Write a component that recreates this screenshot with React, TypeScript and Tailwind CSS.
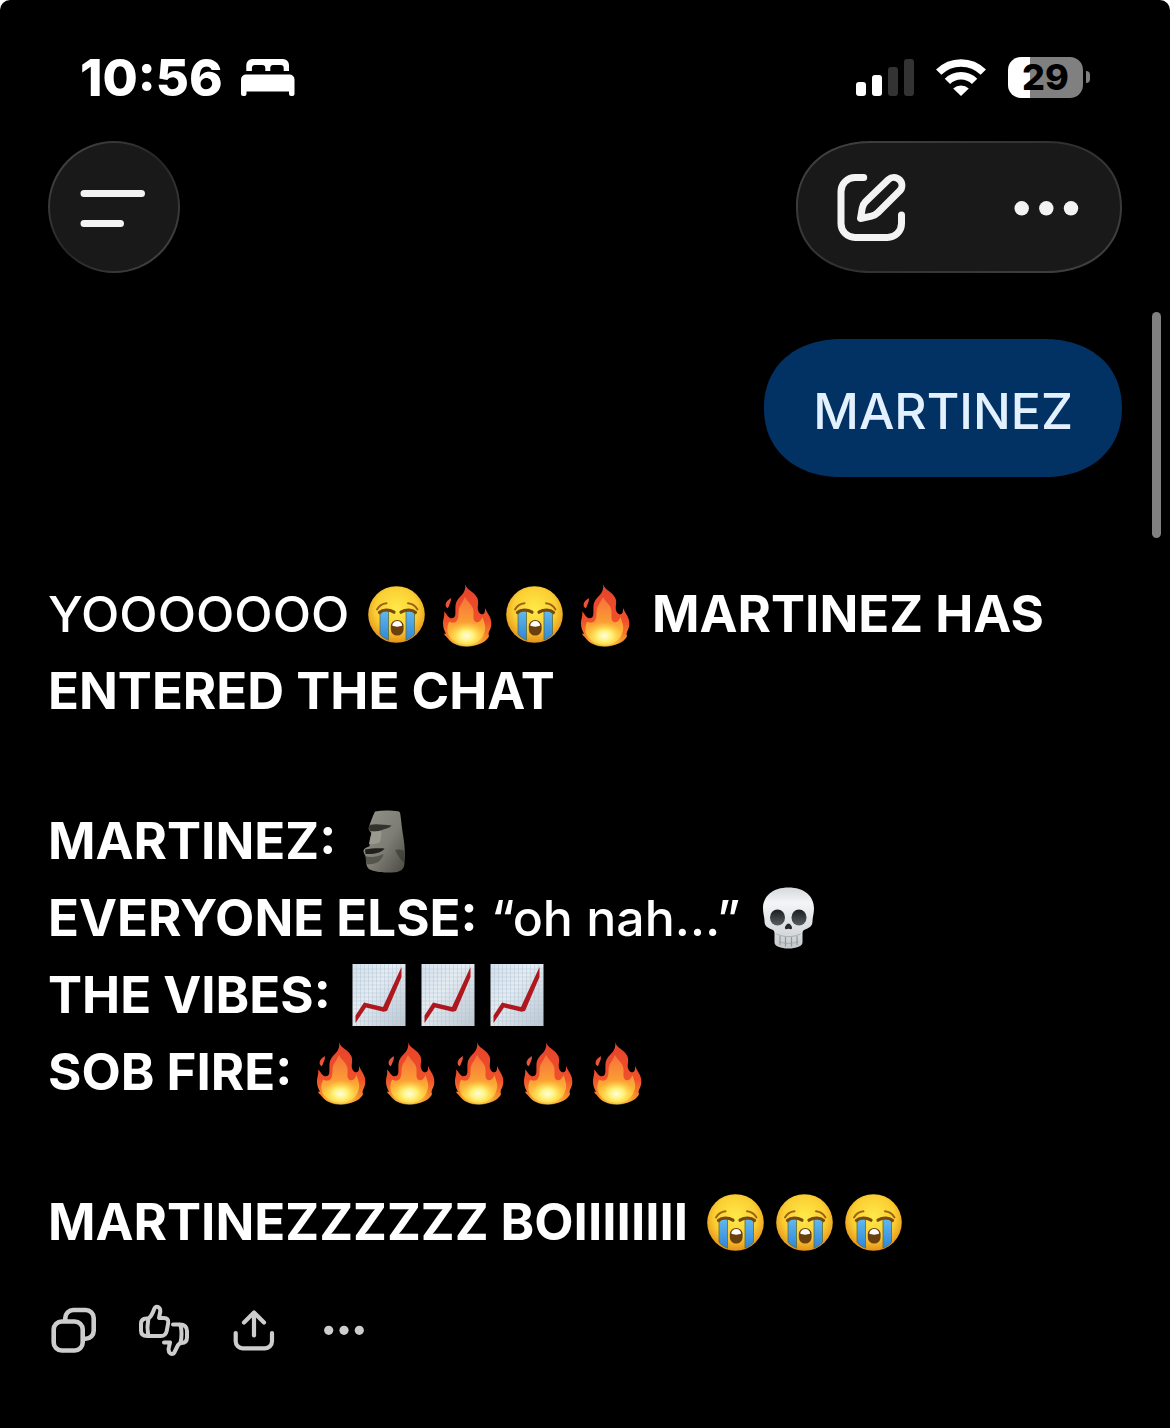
import React from "react";

interface EmojiProps {
  label: string;
  children: React.ReactNode;
}

// One emoji cell, as tall as a line of the message
const Emoji: React.FC<EmojiProps> = ({ label, children }) => (
  <svg
    role="img"
    aria-label={label}
    viewBox="0 0 69 77"
    className="inline-block align-top w-[69px] h-[77px]"
  >
    {children}
  </svg>
);

const Sob = () => (
  <Emoji label="Loudly crying face">
    <circle cx="33.500" cy="38.500" r="28.300" fill="url(#sobFace)" />
    <path
      d="M17 35h8.500v29.200c-3.200-1.400-6-3.300-8.500-6zM43 35h8.500v23.200c-2.500 2.700-5.300 4.600-8.500 6z"
      fill="url(#sobTear)"
      stroke="#5b6f3c"
      strokeWidth=".8"
    />
    <path
      d="M16.500 36.500c3.500-3.200 9.500-3.400 14.500-.3M38 36.200c5-3.100 11-2.900 14.500.3"
      fill="none"
      stroke="#7a4a0c"
      strokeWidth="3.200"
      strokeLinecap="round"
    />
    <path
      d="M14 33.500c2-3.500 5-5.700 9.500-6.200M45 27.300c4.500.5 7.500 2.700 9.500 6.200"
      fill="none"
      stroke="#9a6414"
      strokeWidth="1.900"
      strokeLinecap="round"
    />
    <rect x="27.800" y="44" width="12.800" height="15.500" rx="6.300" fill="#6b3f0e" />
    <path d="M29.200 49.500c.5-3 2.300-4.500 5-4.500s4.500 1.500 5 4.500c-2.500 1.500-7.500 1.500-10 0z" fill="#fff" />
  </Emoji>
);

const Fire = () => (
  <Emoji label="Fire">
    <path
      d="M33.300 8.300C34.500 14 42 15.500 45.300 22c2.200 5-.8 9 1.200 13.500 1.300 3 4.500 4 6 1.200.8-1.500.2-3.200.8-4.700 1 4.500 6 8 6 15.500 0 5-2 7-2.600 9.500-.5 2 .8 2.500 0 4C53 67 45 70.200 35 70.200c-9 0-16-3-19.500-8.200-.8-1.200-3-2.500-3.500-4.500 1 .3 2 .3 2 .3-1.500-3-3-6-3-10.300 0-5 2-7.500 1-12 2.500 1.500 3 5 6 6.500 2.500 1 5-.4 5.300-3.300C24 33 22.300 29 25.500 24c2.700-4.300 8.500-6.500 7.800-15.700z"
      fill="url(#fireOuter)"
    />
    <path
      d="M33 21c2.500 5 8 8 8.500 14 .4 4.500-1 8 1.500 10.500 2.500 2.300 6-.2 7.500-4.500 1.500 5 4 10 2 15-2.300 8-9 12.500-17.500 12.500S18 64 16 57.500c-1.500-4.500 0-9 1-12 2 1.500 6 2 8-1 3-5 0-10 3.500-15.500 2-3 3-5 4.500-8z"
      fill="url(#fireInner)"
    />
    <ellipse cx="34.500" cy="57" rx="19" ry="14" fill="url(#fireCore)" />
    <path d="M18.800 22c.5 3.500-.8 5-1.500 7-.4 1.300-.8 2.300-1.800 3.200-2.500-1.700-2.300-4.700-.5-7 1.200-1.500 2.800-2 3.800-3.200z" fill="#e8553a" />
  </Emoji>
);

const Moai = () => (
  <Emoji label="Moai">
    <path
      d="M25 8.500c8-1.500 17-1 23-.2 1.500.2 2 1.200 2.300 2.700 1 7 1.800 16 3.200 24 1.500 9 1.800 18 .8 27-.4 4-4 6.800-9 7.200-9 .7-20 .3-26-3-3-2-3.500-7-3-12-1.500-2.500-3-4.500-2.800-7 .8-2.500 4-3 6-4 .5-5 1-8.500 2-13-1.500-2-3.500-4-2.500-6.500 1.700-5 3.500-10 6-15.200z"
      fill="url(#moai)"
    />
    <path d="M19.500 22c7-1.500 14 0 22 .5-2 3-6 3-9.500 4.500-4 2-8 1.500-12 1-1-2-1.300-4-.5-6z" fill="#33332e" />
    <path d="M22 28.500c3 .5 6-.2 9-1 .5 4 .5 8-1.500 12-3 1.500-7 2-10.500 1.500 1-5 1.500-8 3-12.500z" fill="#99998f" />
    <path d="M15 46.500c6-1 12.500-1.500 19.500-1-3 4.500-11 6-19 5.500z" fill="#1f1f1c" />
    <path d="M14.500 53c6 2 13 1 19-2-2 8-9 11-16.500 10z" fill="#45453e" opacity=".7" />
    <path d="M45 47c3-1 6-.5 9 .5l.3 12c-4-2-6.300-7-9.300-12.500z" fill="#33332e" opacity=".6" />
  </Emoji>
);

const Skull = () => (
  <Emoji label="Skull">
    <path
      d="M34.500 7.500C50 7.500 60 16 60 28.500c0 5-1.500 9-1.500 12.500 0 5.500-3.500 7-7.500 8.500-2 .8-2.500 2-2.500 4v9c0 3.500-6 6-14 6s-14-2.500-14-6v-9c0-2-.5-3.200-2.500-4-4-1.500-7.500-3-7.500-8.500C10.500 37.500 9 33.500 9 28.500 9 16 19 7.500 34.500 7.500z"
      fill="url(#skull)"
    />
    <ellipse cx="23.500" cy="37.500" rx="7.500" ry="8" fill="url(#socket)" />
    <ellipse cx="45" cy="37.500" rx="7.500" ry="8" fill="url(#socket)" />
    <path d="M34.500 43.500c2 0 4 3.500 3.500 5-.6 1.300-2.300.3-3.500.3s-3 1-3.500-.3c-.5-1.500 1.500-5 3.500-5z" fill="#26282b" />
    <path d="M22.500 54c7.500 3.500 16.500 3.500 24 0M24.500 61.500c6 2.500 14 2.500 20 0" fill="none" stroke="#a9aeb1" strokeWidth="1" />
    <path d="M26 56v9M31.500 57v9.500M37.500 57v9.500M43 56v9" fill="none" stroke="#92989b" strokeWidth="1.200" />
  </Emoji>
);

const Chart = () => (
  <Emoji label="Chart increasing">
    <rect x="8.500" y="7" width="53" height="62" fill="url(#chartPaper)" />
    <path
      d="M12.500 7v62M16.500 7v62M20.500 7v62M24.500 7v62M28.500 7v62M32.500 7v62M36.500 7v62M40.500 7v62M44.500 7v62M48.500 7v62M52.500 7v62M56.500 7v62M9 12h52M9 16h52M9 20h52M9 24h52M9 28h52M9 32h52M9 36h52M9 40h52M9 44h52M9 48h52M9 52h52M9 56h52M9 60h52M9 64h52"
      stroke="#b4c6d6"
      strokeWidth=".5"
    />
    <path d="M11.500 58.500L20 45.500l19 4.500L57.500 10v10L43 54 39.500 54.800 22 50.500 11.500 66z" fill="#ad171d" />
  </Emoji>
);

const EmojiGradients = () => (
  <svg aria-hidden="true" className="absolute w-0 h-0">
    <defs>
      <radialGradient id="sobFace" cx=".5" cy=".4" r=".62">
        <stop offset="0" stopColor="#ffe94a" />
        <stop offset=".6" stopColor="#fbcf33" />
        <stop offset="1" stopColor="#e38c17" />
      </radialGradient>
      <linearGradient id="sobTear" x1="0" y1="0" x2="0" y2="1">
        <stop offset="0" stopColor="#62b8ee" />
        <stop offset="1" stopColor="#2f86d8" />
      </linearGradient>
      <linearGradient id="fireOuter" x1="0" y1="0" x2="0" y2="1">
        <stop offset="0" stopColor="#e5432c" />
        <stop offset=".6" stopColor="#f0512a" />
        <stop offset="1" stopColor="#f9a72b" />
      </linearGradient>
      <linearGradient id="fireInner" x1="0" y1="0" x2="0" y2="1">
        <stop offset="0" stopColor="#f6713a" />
        <stop offset=".5" stopColor="#fb9b35" />
        <stop offset="1" stopColor="#ffd33c" />
      </linearGradient>
      <radialGradient id="fireCore" cx=".5" cy=".6" r=".5">
        <stop offset="0" stopColor="#fffde0" />
        <stop offset=".4" stopColor="#fff176" />
        <stop offset="1" stopColor="#ffd33c" stopOpacity="0" />
      </radialGradient>
      <linearGradient id="moai" x1="0" y1="0" x2="1" y2="1">
        <stop offset="0" stopColor="#94948b" />
        <stop offset=".55" stopColor="#7d7d74" />
        <stop offset="1" stopColor="#4a4a43" />
      </linearGradient>
      <linearGradient id="skull" x1="0" y1="0" x2="0" y2="1">
        <stop offset="0" stopColor="#d5d9dc" />
        <stop offset=".25" stopColor="#f3f5f6" />
        <stop offset=".7" stopColor="#d9dde0" />
        <stop offset="1" stopColor="#c3c8cb" />
      </linearGradient>
      <linearGradient id="socket" x1="0" y1="0" x2="0" y2="1">
        <stop offset="0" stopColor="#1b1d1f" />
        <stop offset="1" stopColor="#5a5e61" />
      </linearGradient>
      <linearGradient id="chartPaper" x1="0" y1="0" x2="1" y2="1">
        <stop offset="0" stopColor="#d3e0eb" />
        <stop offset=".4" stopColor="#e6edf3" />
        <stop offset="1" stopColor="#bcc7d1" />
      </linearGradient>
    </defs>
  </svg>
);

const StatusBar = () => (
  <div className="flex items-center justify-between h-15 px-8 text-white">
    <div className="flex items-center gap-[18px]">
      <time className="pt-[2px] text-[51px] leading-[60px] font-extrabold">10:56</time>
      <svg viewBox="0 0 54 37" className="w-[54px] h-[37px]" fill="currentColor" aria-label="Sleep focus">
        <path d="M5.300 12V6a6 6 0 0 1 6-6H42a6 6 0 0 1 6 6v6h-5.300V9a3 3 0 0 0-3-3h-7.400a3 3 0 0 0-3 3v3h-5V9a3 3 0 0 0-3-3h-7.400a3 3 0 0 0-3 3v3z" />
        <path d="M0 20.500a5 5 0 0 1 5-5h43.500a5 5 0 0 1 5 5V35a2 2 0 0 1-2 2H50a2 2 0 0 1-2-2v-2.500H5.500V35a2 2 0 0 1-2 2H2a2 2 0 0 1-2-2z" />
      </svg>
    </div>
    <div className="flex items-center gap-[22px]">
      <svg viewBox="0 0 58 37" className="w-[58px] h-[37px]" aria-label="Signal strength">
        <rect x="0" y="23" width="10" height="14" rx="3" fill="#fff" />
        <rect x="16" y="16" width="10" height="21" rx="3" fill="#fff" />
        <rect x="32" y="8" width="10" height="29" rx="3" fill="#333" />
        <rect x="48" y="0" width="10" height="37" rx="3" fill="#333" />
      </svg>
      <svg viewBox="0 0 50 37" className="w-[50px] h-[37px]" fill="none" stroke="currentColor" strokeWidth="7.500" aria-label="Wi-Fi">
        <path d="M2.700 13.200a31.500 31.500 0 0 1 44.600 0" />
        <path d="M11.400 22.300a19.200 19.200 0 0 1 27.200 0" />
        <path d="M25 37l-7.800-7.500a11.500 11.500 0 0 1 15.600 0z" fill="currentColor" stroke="none" />
      </svg>
      <div className="flex items-center gap-[3px]">
        <div className="flex items-center justify-center w-[75px] h-[41px] rounded-[13px] bg-linear-to-r from-white from-29% to-[#808080] to-29%">
          <span className="text-4xl font-extrabold leading-none text-black">29</span>
        </div>
        <div className="w-1 h-3 rounded-r-full bg-[#808080]" />
      </div>
    </div>
  </div>
);

const Header = () => (
  <header className="flex items-center justify-between mt-[34px] text-[#f3f3f3]">
    <button
      aria-label="Open menu"
      className="w-[132px] h-[132px] rounded-full bg-linear-135 from-[#4a4a4a] via-[#262626] to-[#4a4a4a] p-[2px]"
    >
      <span className="flex items-center justify-center w-full h-full rounded-full bg-[#191919]">
        <svg viewBox="0 0 132 132" className="w-[132px] h-[132px] shrink-0" stroke="currentColor" strokeWidth="7" strokeLinecap="round">
          <path d="M36 52.500h57.500M36 82.500h36.500" />
        </svg>
      </span>
    </button>
    <div className="w-[326px] h-[132px] rounded-[76px/66px] [corner-shape:superellipse(1.12)] bg-linear-150 from-[#424242] via-[#303030] to-[#424242] p-[2px]">
      <div className="flex items-center justify-between w-full h-full px-[38px] rounded-[74px/64px] [corner-shape:superellipse(1.12)] bg-[#191919]">
        <button aria-label="New chat">
          <svg viewBox="0 0 72 72" className="w-[72px] h-[72px]" fill="none" stroke="currentColor" strokeWidth="7" strokeLinecap="round" strokeLinejoin="round">
            <path d="M27.700 6.500H19a14 14 0 0 0-14 14v32a14 14 0 0 0 14 14h32.500a14 14 0 0 0 14-14V44" />
            <path d="M52.500 8.500a8 8 0 0 1 11.300 11.300L42 41.500c-2 2-4 3-6.500 3.600l-11 2.400 1.800-10.500c.4-2.500 1.400-4.500 3.200-6.300z" />
          </svg>
        </button>
        <button aria-label="More options">
          <svg viewBox="0 0 72 72" className="w-[72px] h-[72px]" fill="currentColor">
            <circle cx="11.700" cy="37.300" r="7.200" />
            <circle cx="36.300" cy="37.300" r="7.200" />
            <circle cx="61" cy="37.300" r="7.200" />
          </svg>
        </button>
      </div>
    </div>
  </header>
);

const Bold: React.FC<{ children: React.ReactNode }> = ({ children }) => (
  <strong className="text-[51px] leading-none font-bold">{children}</strong>
);

const actions = [
  {
    label: "Copy",
    icon: (
      <g strokeWidth="4.600">
        <rect x="5.700" y="17.500" width="29" height="29" rx="8" />
        <path d="M17.300 16v-2a8 8 0 0 1 8-8h12.400a8 8 0 0 1 8 8v12.700a8 8 0 0 1-8 8H36" />
      </g>
    ),
  },
  {
    label: "Rate response",
    icon: (
      <g strokeWidth="4">
        <path d="M10.500 14.500c3.200-2.500 4.500-6 5.700-9.500.8-2.300 2.600-2.800 4.300-1.800 2.500 1.500 2 4.300 1.300 6.800L21 14h5c3.200 0 4.700 2 4.200 5l-1.500 8c-.7 3.500-2.700 5-6 5H9c-4 0-6-2-6-5.500V20c0-3.500 2-5.500 5.500-5.500z" />
        <path d="M10.300 15c-1 5-1 12 0 17" />
        <path d="M35 20.500h7c4.500 0 7 2.500 7 6.500v6c0 4-2 6-5.500 6-3 0-3.700 2-4.700 4.500l-2.500 5c-.8 1.600-2.500 1.800-4 .8-2.500-1.800-2-4-1.300-6.500l1-4.300h-6" />
        <path d="M42.500 21c1.200 5 1.200 12.500 0 18" />
      </g>
    ),
  },
  {
    label: "Share",
    icon: (
      <g strokeWidth="4.200">
        <path d="M7.700 29v8.300a7 7 0 0 0 7 7H37a7 7 0 0 0 7-7V29" />
        <path d="M26 31.500v-22M16 18.500l10-10 10 10" />
      </g>
    ),
  },
  {
    label: "More",
    icon: (
      <g fill="currentColor" stroke="none">
        <circle cx="10.700" cy="26.300" r="4.600" />
        <circle cx="26" cy="26.300" r="4.600" />
        <circle cx="41.300" cy="26.300" r="4.600" />
      </g>
    ),
  },
];

const App: React.FC = () => {
  return (
    <div className="min-h-screen bg-white">
      <EmojiGradients />
      <div className="relative min-h-screen px-12 pt-[47px] pb-16 overflow-hidden rounded-t-[10px] bg-black font-['Inter',sans-serif]">
        <StatusBar />
        <Header />

        <main className="text-[50px] leading-[77px] text-white">
          <div className="flex justify-end mt-[66px]">
            <div className="flex items-center h-[138px] px-[49px] pt-[7px] rounded-[78px/69px] [corner-shape:superellipse(1.12)] bg-[#023264] font-medium text-[#e3f1ff]">
              MARTINEZ
            </div>
          </div>

          <div className="flex flex-col gap-[73px] mt-[99px] font-[450]">
            <p>
              YOOOOOOO <Sob /><Fire /><Sob /><Fire /> <Bold>MARTINEZ HAS</Bold>
              <br />
              <Bold>ENTERED THE CHAT</Bold>
            </p>
            <p>
              <Bold>MARTINEZ:</Bold> <Moai />
              <br />
              <Bold>EVERYONE ELSE:</Bold> “oh nah…” <Skull />
              <br />
              <Bold>THE VIBES:</Bold> <Chart /><Chart /><Chart />
              <br />
              <Bold>SOB FIRE:</Bold> <Fire /><Fire /><Fire /><Fire /><Fire />
            </p>
            <p>
              <Bold>MARTINEZZZZZZ BOIIIIIIII</Bold> <Sob /><Sob /><Sob />
            </p>
          </div>

          <div className="flex gap-[38px] mt-[43px] text-[#cdcdcd]">
            {actions.map((action) => (
              <button key={action.label} aria-label={action.label}>
                <svg viewBox="0 0 52 52" className="w-[52px] h-[52px]" fill="none" stroke="currentColor" strokeLinecap="round" strokeLinejoin="round">
                  {action.icon}
                </svg>
              </button>
            ))}
          </div>
        </main>

        {/* Scroll indicator */}
        <div className="absolute right-[9px] top-[312px] w-[9px] h-[226px] rounded-full bg-[#808080]" />
      </div>
    </div>
  );
};

export default App;
